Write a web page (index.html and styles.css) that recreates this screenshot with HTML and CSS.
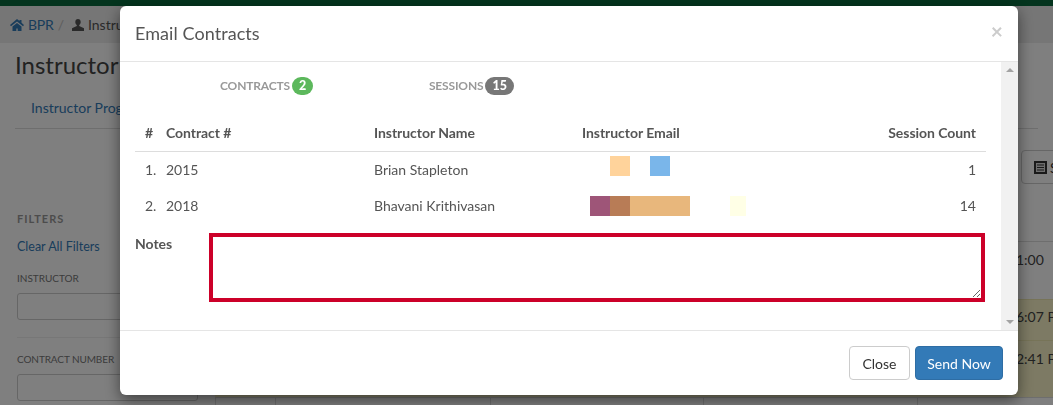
FILE: index.html
```html
<!DOCTYPE html>
<html lang="en">
<head>
<meta charset="utf-8">
<title>Email Contracts</title>
<link rel="stylesheet" href="styles.css">
</head>
<body>
<div class="page">
  <div class="topbar"></div>
  <div class="crumbs">
    <svg class="crumb-icon" viewBox="0 0 14 12" width="14" height="12"><path fill="#337ab7" d="M7 0 0 6l1 1.300 6-4.800 6 4.800L14 6l-2.500-2.200V1h-2v1.100zM2.500 7.600V12h3.800V9.500h1.400V12h3.800V7.600L7 4.100z"/></svg>
    <a class="crumb-link">BPR</a>
    <span class="crumb-sep">/</span>
    <svg class="crumb-icon user" viewBox="0 0 12 12" width="12" height="12"><path fill="#555" d="M6 0C4.300 0 3.300 1.300 3.300 3c0 1.300.6 2.500 1.500 3.100v1L0 9.200V12h12V9.200L7.200 7.100v-1C8.100 5.500 8.700 4.300 8.700 3 8.700 1.300 7.700 0 6 0z"/></svg>
    <span class="crumb-text">Instructor Program</span>
  </div>
  <h1 class="title">Instructor Program</h1>
  <div class="tabs"><a class="tab">Instructor Program</a></div>
  <div class="content">
    <aside class="filters">
      <h4 class="filters-title">FILTERS</h4>
      <a class="clear">Clear All Filters</a>
      <label class="filter-label first">INSTRUCTOR</label>
      <div class="filter-input"></div>
      <hr class="filter-rule">
      <label class="filter-label">CONTRACT NUMBER</label>
      <div class="filter-input"></div>
    </aside>
    <main class="results">
      <div class="toolbar"><span class="tool-btn"><svg viewBox="0 0 13 13" width="13" height="13"><path fill="#333" d="M0 0h13v13H0z"/><path fill="#ddd" d="M2 2h9v9H2z"/><path fill="#333" d="M3 3.500h7v1H3zM3 6h7v1H3zM3 8.500h7v1H3z"/></svg> Send</span></div>
      <div class="row r1"><span>1:00</span></div>
      <div class="row r2"><span>6:07 PM</span></div>
      <div class="row r3"><span>2:41 PM</span></div>
      <div class="row-cells"><i></i><i></i><i></i><i></i><i></i></div>
    </main>
  </div>
</div>
<div class="backdrop"></div>
<div class="modal">
  <header class="modal-head">
    <h4 class="modal-title">Email Contracts</h4>
    <span class="close-x">×</span>
  </header>
  <div class="modal-body">
    <div class="scroll-content">
      <div class="counts">
        <span class="count c1">CONTRACTS<b class="badge green">2</b></span>
        <span class="count c2">SESSIONS<b class="badge grey">15</b></span>
      </div>
      <table class="grid">
        <thead>
          <tr><th class="n">#</th><th class="cn">Contract #</th><th class="nm">Instructor Name</th><th class="em">Instructor Email</th><th class="ct">Session Count</th></tr>
        </thead>
        <tbody>
          <tr>
            <td class="n">1.</td><td>2015</td><td>Brian Stapleton</td>
            <td><div class="redact one"><i class="peach"></i><i class="blue"></i></div></td>
            <td class="ct">1</td>
          </tr>
          <tr>
            <td class="n">2.</td><td>2018</td><td>Bhavani Krithivasan</td>
            <td><div class="redact two"><i class="plum"></i><i class="brown"></i><i class="tan"></i><i class="cream"></i></div></td>
            <td class="ct">14</td>
          </tr>
        </tbody>
      </table>
      <div class="notes">
        <label class="notes-label">Notes</label>
        <textarea class="notes-box"></textarea>
      </div>
    </div>
    <div class="scrollbar">
      <span class="arrow up"></span>
      <span class="arrow down"></span>
    </div>
  </div>
  <footer class="modal-foot">
    <button class="btn plain">Close</button>
    <button class="btn primary">Send Now</button>
  </footer>
</div>
</body>
</html>
```
FILE: styles.css
```css
* { box-sizing: border-box; }
html, body { margin: 0; height: 100%; }
body {
  overflow: hidden;
  font-family: Lato, "Liberation Sans", sans-serif;
  font-size: 14px;
  color: #555;
  background: #fff;
}
.page { height: 405px; overflow: hidden; }
.topbar { height: 6px; background: #08693c; }
.crumbs {
  height: 37px;
  padding-left: 10px;
  display: flex;
  align-items: center;
  gap: 4px;
  background: #ececec;
  white-space: nowrap;
  font-size: 14px;
}
.crumb-link { color: #337ab7; letter-spacing: -.2px; }
.crumb-sep { color: #bbb; }
.user { margin-left: 4px; }
.crumb-text { color: #555; }
.title {
  margin: 5px 0 0 15px;
  font-size: 24px;
  font-weight: 400;
  line-height: 34px;
  color: #444;
  white-space: nowrap;
}
.tabs {
  margin: 16px 15px 0;
  height: 31px;
  padding: 0 16px;
  line-height: 20px;
  border-bottom: 1px solid #ddd;
  white-space: nowrap;
}
.tab { color: #337ab7; }
.content { display: flex; }
.filters { width: 198px; margin-left: 17px; padding-top: 83px; flex: none; }
.filters-title { margin: 0; font-size: 11px; font-weight: 700; letter-spacing: 1px; color: #999; line-height: 14px; }
.clear { display: block; margin-top: 13px; font-size: 12.500px; line-height: 16px; color: #337ab7; }
.filter-label { display: block; font-size: 10px; line-height: 14px; color: #777; letter-spacing: -.1px; }
.filter-label.first { margin-top: 16px; letter-spacing: 0; }
.filter-input { margin-top: 8px; height: 27px; width: 181px; border: 1px solid #ccc; border-radius: 3px; background: #fff; }
.filter-rule { margin: 17px 0 14px; border: 0; border-top: 1px solid #eee; width: 181px; }
.results { flex: 1; padding-top: 21px; min-width: 0; }
.toolbar { display: flex; justify-content: flex-start; padding-left: 806px; height: 91px; }
.tool-btn { display: flex; align-items: center; gap: 3px; height: 34px; padding: 0 12px; width: 80px; flex: none; border: 1px solid #ccc; border-radius: 4px; color: #333; background: #fff; }
.row { padding-left: 801px; border-top: 1px solid #ddd; font-size: 14px; line-height: 20px; white-space: nowrap; color: #444; }
.r1 { height: 58px; padding-top: 8px; }
.r2 { height: 41px; padding-top: 7px; background: #faf5c8; border-top-color: #eee8b0; }
.r3 { height: 57px; padding-top: 8px; background: #faf5c8; border-top-color: #eee8b0; }
.row-cells { display: grid; grid-template-columns: 60px 215px 213px 214px 1fr; height: 8px; border-top: 1px solid #ddd; background: #fff; }
.row-cells i { display: block; border-left: 1px solid #ddd; }
.backdrop { position: fixed; inset: 0; background: rgba(0, 0, 0, .5); }
.modal {
  position: fixed;
  left: 120px;
  top: 6px;
  width: 898px;
  height: 389px;
  background: #fff;
  border-radius: 6px;
  box-shadow: 0 5px 15px rgba(0, 0, 0, .5);
  display: flex;
  flex-direction: column;
  overflow: hidden;
}
.modal-head {
  height: 56px;
  flex: none;
  padding: 0 15px 2px;
  border-bottom: 1px solid #e5e5e5;
  display: flex;
  align-items: center;
  justify-content: space-between;
}
.modal-title { margin: 0; font-size: 18px; font-weight: 400; color: #555; letter-spacing: .07px; }
.close-x { font-size: 21px; font-weight: 700; line-height: 1; color: #ccc; margin-top: -4px; }
.modal-body { flex: 1; display: flex; min-height: 0; }
.scroll-content { flex: 1; padding: 0 15px; }
.counts { height: 49px; display: block; padding-top: 14px; white-space: nowrap; }
.count { display: inline-flex; align-items: center; font-size: 12px; font-weight: 700; color: #999; letter-spacing: -.15px; }
.c1 { margin-left: 85px; }
.c2 { margin-left: 112px; }
.badge { display: inline-block; margin-left: 2px; min-width: 10px; padding: 3px 7px; border-radius: 10px; font-size: 12.500px; line-height: 12px; color: #fff; letter-spacing: 0; }
.green { background: #5cb85c; }
.grey { background: #777; }
.grid { width: 851px; border-collapse: collapse; table-layout: fixed; color: #555; }
.grid th { height: 40px; padding: 4px 10px 0 0; text-align: left; font-size: 14px; font-weight: 700; border-bottom: 1px solid #ddd; letter-spacing: -.05px; }
.grid td { height: 36px; padding: 0; font-size: 14px; vertical-align: middle; }
.grid .n { width: 31px; padding-left: 10px; }
.grid .cn { width: 208px; }
.grid .nm { width: 208px; }
.grid th.em { width: 304px; }
.grid .ct { width: 100px; padding-right: 10px; text-align: right; }
.redact { display: flex; height: 20px; margin-top: 2px; }
.redact i { display: block; height: 20px; }
.one { padding-left: 28px; margin-bottom: 8px; }
.two { padding-left: 8px; }
.peach { width: 20px; background: #ffd39b; margin-right: 20px; }
.blue { width: 20px; background: #7ab6ea; }
.plum { width: 20px; background: #9e5578; }
.brown { width: 20px; background: #b87c56; }
.tan { width: 60px; background: #e8b77c; margin-right: 40px; }
.cream { width: 16px; background: #ffffe6; }
.notes { display: flex; margin-top: 10px; }
.notes-label { width: 74px; flex: none; padding-top: 2px; font-weight: 700; font-size: 14px; line-height: 18px; }
.notes-box {
  width: 776px;
  height: 69px;
  display: block;
  border: 4px solid #cc0029;
  background: #fff;
  outline: 0;
}
.scrollbar { width: 17px; flex: none; background: #f1f1f1; display: flex; flex-direction: column; justify-content: space-between; align-items: center; padding: 6px 0; }
.arrow { width: 0; height: 0; border-left: 4px solid transparent; border-right: 4px solid transparent; }
.up { border-bottom: 4px solid #a3a3a3; }
.down { border-top: 4px solid #a3a3a3; }
.modal-foot {
  height: 65px;
  flex: none;
  border-top: 1px solid #e5e5e5;
  padding: 15px;
  display: flex;
  justify-content: flex-end;
  gap: 5px;
}
.btn { height: 34px; padding: 0; border-radius: 4px; font: 400 14px Lato, "Liberation Sans", sans-serif; border: 1px solid #ccc; white-space: nowrap; }
.plain { width: 61px; background: #fff; color: #333; }
.primary { width: 88px; background: #337ab7; border-color: #2e6da4; color: #fff; }
```
